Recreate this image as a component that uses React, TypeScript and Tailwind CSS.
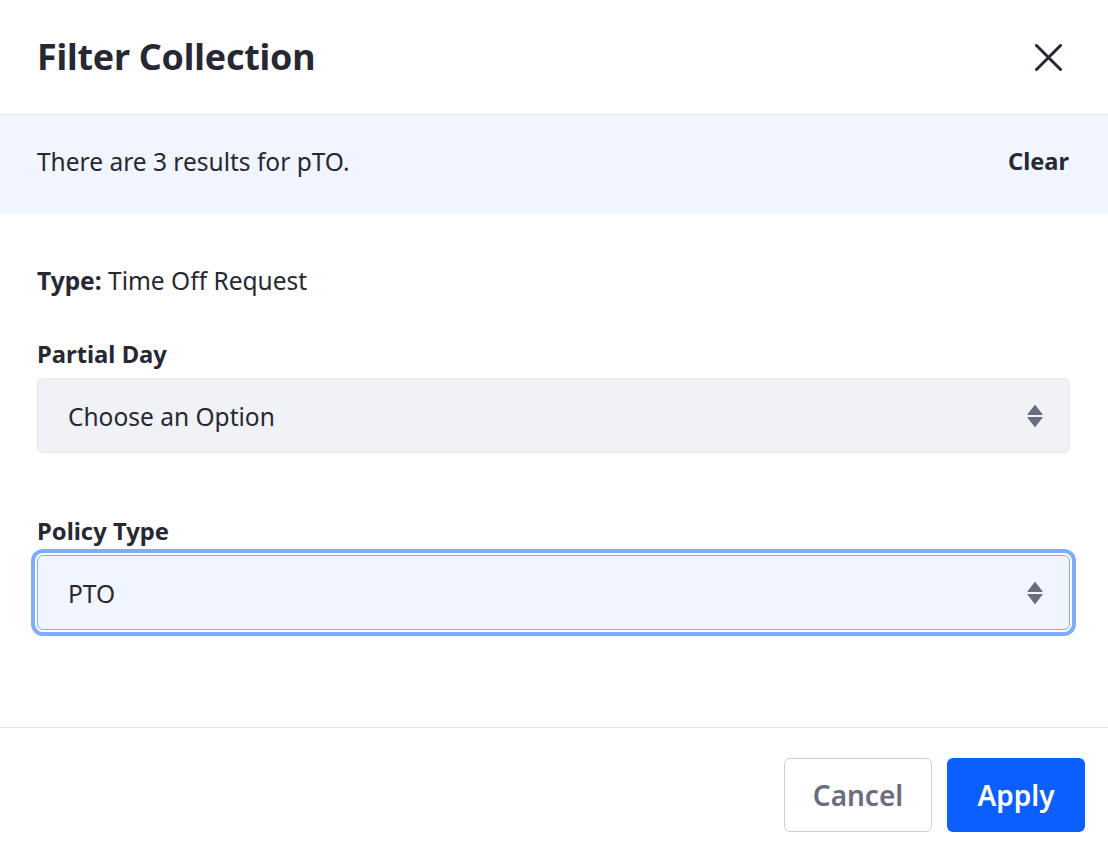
import React from 'react'

const SelectArrows = () => (
  <svg width="16" height="24" viewBox="0 0 16 24" className="shrink-0">
    <path d="M8 1.5 L15 10.5 H1 Z" fill="#6b6c7e" stroke="#6b6c7e" strokeWidth="1.2" strokeLinejoin="round" />
    <path d="M8 22.5 L15 13.5 H1 Z" fill="#6b6c7e" stroke="#6b6c7e" strokeWidth="1.2" strokeLinejoin="round" />
  </svg>
)

type SelectProps = {
  value: string
  focused?: boolean
}

const FakeSelect = ({value, focused}: SelectProps) => (
  <div
    className={
      focused
        ? 'flex h-[75px] items-center justify-between rounded-[6px] border border-[#80acff] bg-[#f0f5ff] pl-[30px] pr-[26px] shadow-[0_0_0_2px_#fff,0_0_0_6px_#80acff]'
        : 'flex h-[75px] items-center justify-between rounded-[6px] border border-[#e7e7ed] bg-[#f1f2f5] pl-[30px] pr-[26px]'
    }
  >
    <span className="pt-[4px] text-[24.5px] text-[#272833]">{value}</span>
    <SelectArrows />
  </div>
)

export default function App() {
  return (
    <div className="flex h-[858px] w-[1108px] flex-col bg-white font-['Noto_Sans',sans-serif] text-[#272833]">
      {/* header */}
      <header className="flex h-[115px] shrink-0 items-center justify-between border-b border-[#e7e7ed] pl-[37px] pr-[45px]">
        <h1 className="text-[35.8px] font-bold leading-none tracking-[-0.2px]">Filter Collection</h1>
        <button className="flex h-[30px] w-[30px] items-center justify-center">
          <svg width="27" height="27" viewBox="0 0 27 27">
            <path d="M1.5 1.5 L25.5 25.5 M25.5 1.5 L1.5 25.5" stroke="#272833" strokeWidth="3" strokeLinecap="round" />
          </svg>
        </button>
      </header>

      {/* results bar */}
      <div className="flex h-[98px] shrink-0 items-center justify-between bg-[#f0f5ff] pb-[4px] pl-[37px] pr-[39px]">
        <p className="text-[24.5px]">There are 3 results for pTO.</p>
        <button className="text-[23.6px] font-bold">Clear</button>
      </div>

      {/* body */}
      <div className="flex flex-1 flex-col px-[37px] pt-[52px]">
        <p className="text-[24.5px] leading-[32px]">
          <span className="font-bold">Type:</span> Time Off Request
        </p>

        <div className="mt-[41px]">
          <label className="block text-[23.8px] font-bold leading-[32px]">Partial Day</label>
          <div className="mt-[8px] pr-[1px]">
            <FakeSelect value="Choose an Option" />
          </div>
        </div>

        <div className="mt-[62px]">
          <label className="block text-[23.8px] font-bold leading-[32px]">Policy Type</label>
          <div className="mt-[8px] pr-[1px]">
            <FakeSelect value="PTO" focused />
          </div>
        </div>
      </div>

      {/* footer */}
      <footer className="flex h-[131px] shrink-0 items-center justify-end gap-[15px] border-t border-[#e7e7ed] pr-[23px] pt-[4px]">
        <button className="h-[74px] w-[148px] rounded-[6px] border border-[#cdced9] bg-white text-[28px] font-semibold text-[#6b6c7e]">
          Cancel
        </button>
        <button className="h-[74px] w-[138px] rounded-[6px] bg-[#0b5fff] text-[28px] font-semibold text-white">
          Apply
        </button>
      </footer>
    </div>
  )
}
